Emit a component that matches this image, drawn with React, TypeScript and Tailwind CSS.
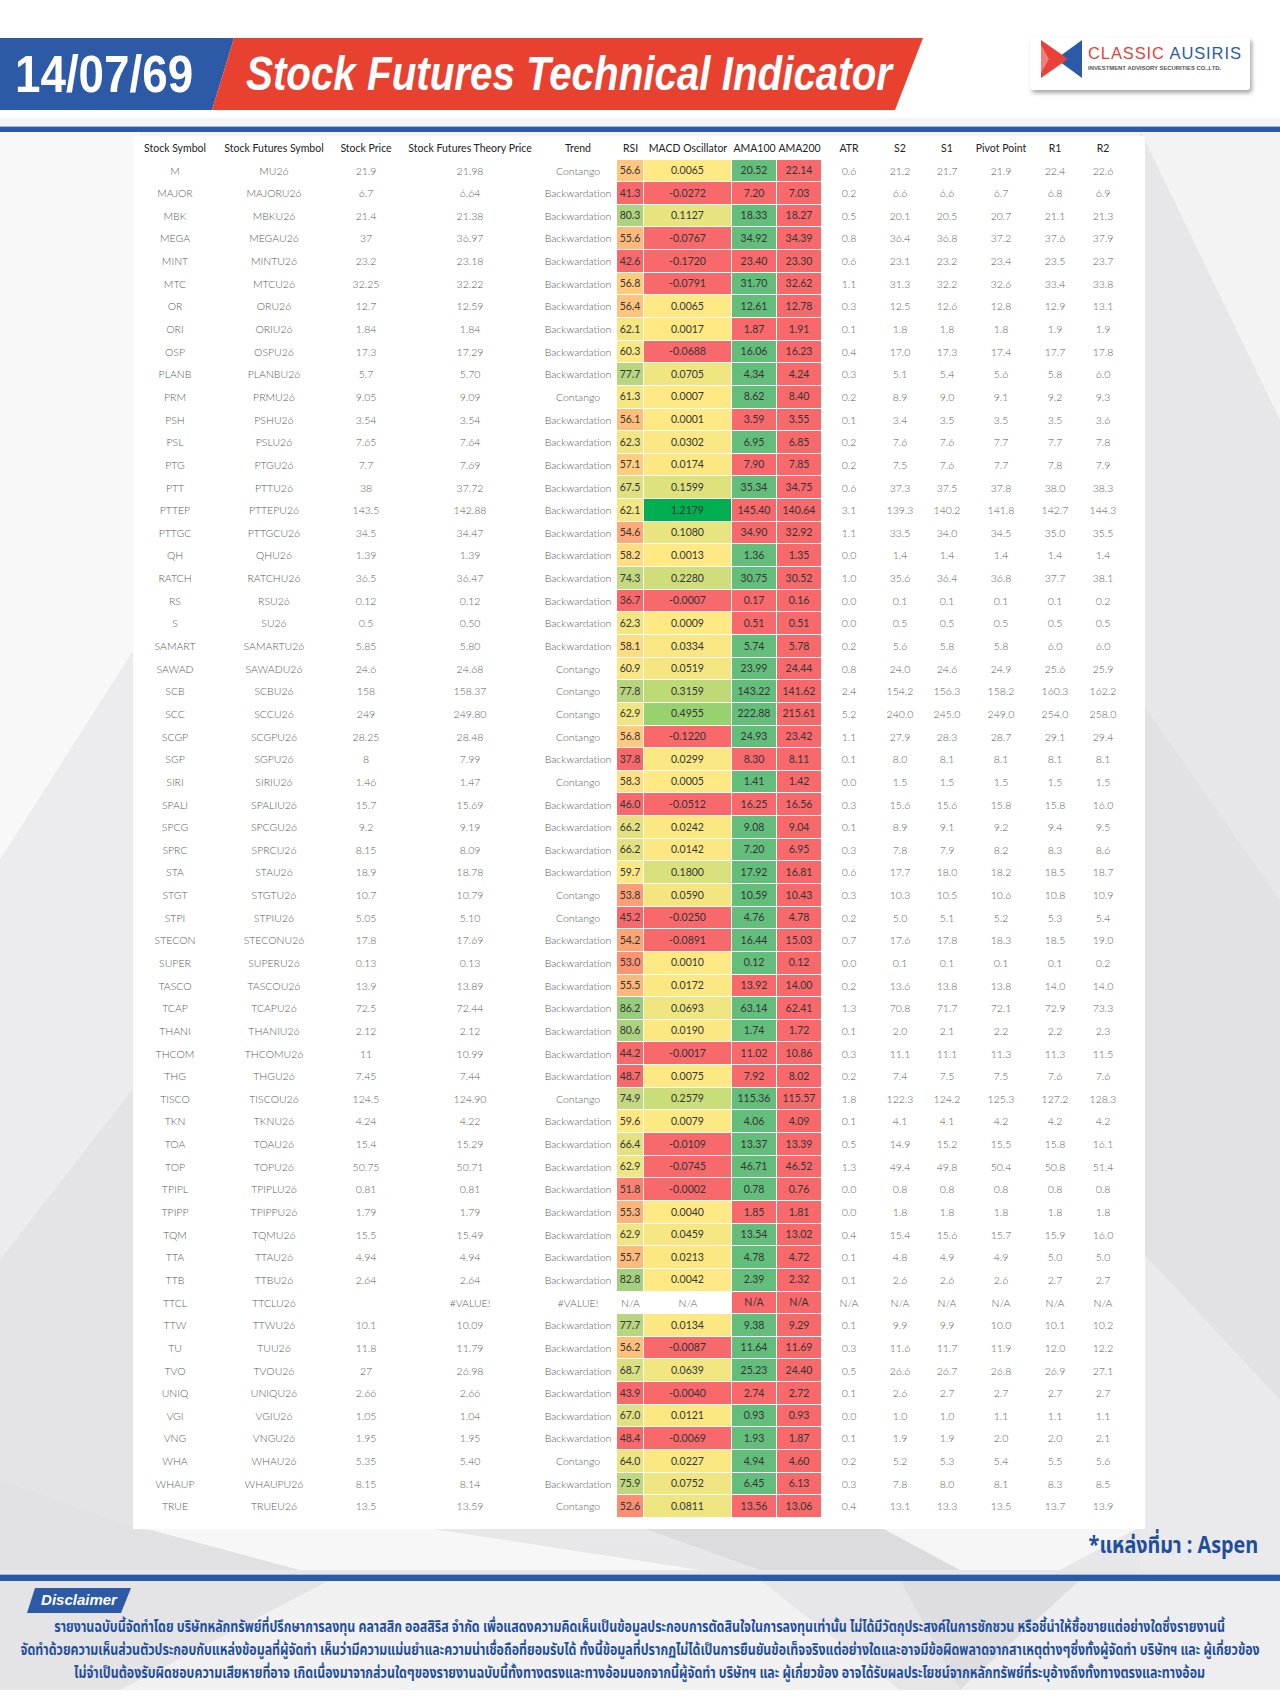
import React from "react";

type Row = string[];

const B = "Backwardation";
const C = "Contango";

const rows: Row[] = [
  ["M", "MU26", "21.9", "21.98", C, "56.6", "0.0065", "20.52", "22.14", "0.6", "21.2", "21.7", "21.9", "22.4", "22.6"],
  ["MAJOR", "MAJORU26", "6.7", "6.64", B, "41.3", "-0.0272", "7.20", "7.03", "0.2", "6.6", "6.6", "6.7", "6.8", "6.9"],
  ["MBK", "MBKU26", "21.4", "21.38", B, "80.3", "0.1127", "18.33", "18.27", "0.5", "20.1", "20.5", "20.7", "21.1", "21.3"],
  ["MEGA", "MEGAU26", "37", "36.97", B, "55.6", "-0.0767", "34.92", "34.39", "0.8", "36.4", "36.8", "37.2", "37.6", "37.9"],
  ["MINT", "MINTU26", "23.2", "23.18", B, "42.6", "-0.1720", "23.40", "23.30", "0.6", "23.1", "23.2", "23.4", "23.5", "23.7"],
  ["MTC", "MTCU26", "32.25", "32.22", B, "56.8", "-0.0791", "31.70", "32.62", "1.1", "31.3", "32.2", "32.6", "33.4", "33.8"],
  ["OR", "ORU26", "12.7", "12.59", B, "56.4", "0.0065", "12.61", "12.78", "0.3", "12.5", "12.6", "12.8", "12.9", "13.1"],
  ["ORI", "ORIU26", "1.84", "1.84", B, "62.1", "0.0017", "1.87", "1.91", "0.1", "1.8", "1.8", "1.8", "1.9", "1.9"],
  ["OSP", "OSPU26", "17.3", "17.29", B, "60.3", "-0.0688", "16.06", "16.23", "0.4", "17.0", "17.3", "17.4", "17.7", "17.8"],
  ["PLANB", "PLANBU26", "5.7", "5.70", B, "77.7", "0.0705", "4.34", "4.24", "0.3", "5.1", "5.4", "5.6", "5.8", "6.0"],
  ["PRM", "PRMU26", "9.05", "9.09", C, "61.3", "0.0007", "8.62", "8.40", "0.2", "8.9", "9.0", "9.1", "9.2", "9.3"],
  ["PSH", "PSHU26", "3.54", "3.54", B, "56.1", "0.0001", "3.59", "3.55", "0.1", "3.4", "3.5", "3.5", "3.5", "3.6"],
  ["PSL", "PSLU26", "7.65", "7.64", B, "62.3", "0.0302", "6.95", "6.85", "0.2", "7.6", "7.6", "7.7", "7.7", "7.8"],
  ["PTG", "PTGU26", "7.7", "7.69", B, "57.1", "0.0174", "7.90", "7.85", "0.2", "7.5", "7.6", "7.7", "7.8", "7.9"],
  ["PTT", "PTTU26", "38", "37.72", B, "67.5", "0.1599", "35.34", "34.75", "0.6", "37.3", "37.5", "37.8", "38.0", "38.3"],
  ["PTTEP", "PTTEPU26", "143.5", "142.88", B, "62.1", "1.2179", "145.40", "140.64", "3.1", "139.3", "140.2", "141.8", "142.7", "144.3"],
  ["PTTGC", "PTTGCU26", "34.5", "34.47", B, "54.6", "0.1080", "34.90", "32.92", "1.1", "33.5", "34.0", "34.5", "35.0", "35.5"],
  ["QH", "QHU26", "1.39", "1.39", B, "58.2", "0.0013", "1.36", "1.35", "0.0", "1.4", "1.4", "1.4", "1.4", "1.4"],
  ["RATCH", "RATCHU26", "36.5", "36.47", B, "74.3", "0.2280", "30.75", "30.52", "1.0", "35.6", "36.4", "36.8", "37.7", "38.1"],
  ["RS", "RSU26", "0.12", "0.12", B, "36.7", "-0.0007", "0.17", "0.16", "0.0", "0.1", "0.1", "0.1", "0.1", "0.2"],
  ["S", "SU26", "0.5", "0.50", B, "62.3", "0.0009", "0.51", "0.51", "0.0", "0.5", "0.5", "0.5", "0.5", "0.5"],
  ["SAMART", "SAMARTU26", "5.85", "5.80", B, "58.1", "0.0334", "5.74", "5.78", "0.2", "5.6", "5.8", "5.8", "6.0", "6.0"],
  ["SAWAD", "SAWADU26", "24.6", "24.68", C, "60.9", "0.0519", "23.99", "24.44", "0.8", "24.0", "24.6", "24.9", "25.6", "25.9"],
  ["SCB", "SCBU26", "158", "158.37", C, "77.8", "0.3159", "143.22", "141.62", "2.4", "154.2", "156.3", "158.2", "160.3", "162.2"],
  ["SCC", "SCCU26", "249", "249.80", C, "62.9", "0.4955", "222.88", "215.61", "5.2", "240.0", "245.0", "249.0", "254.0", "258.0"],
  ["SCGP", "SCGPU26", "28.25", "28.48", C, "56.8", "-0.1220", "24.93", "23.42", "1.1", "27.9", "28.3", "28.7", "29.1", "29.4"],
  ["SGP", "SGPU26", "8", "7.99", B, "37.8", "0.0299", "8.30", "8.11", "0.1", "8.0", "8.1", "8.1", "8.1", "8.1"],
  ["SIRI", "SIRIU26", "1.46", "1.47", C, "58.3", "0.0005", "1.41", "1.42", "0.0", "1.5", "1.5", "1.5", "1.5", "1.5"],
  ["SPALI", "SPALIU26", "15.7", "15.69", B, "46.0", "-0.0512", "16.25", "16.56", "0.3", "15.6", "15.6", "15.8", "15.8", "16.0"],
  ["SPCG", "SPCGU26", "9.2", "9.19", B, "66.2", "0.0242", "9.08", "9.04", "0.1", "8.9", "9.1", "9.2", "9.4", "9.5"],
  ["SPRC", "SPRCU26", "8.15", "8.09", B, "66.2", "0.0142", "7.20", "6.95", "0.3", "7.8", "7.9", "8.2", "8.3", "8.6"],
  ["STA", "STAU26", "18.9", "18.78", B, "59.7", "0.1800", "17.92", "16.81", "0.6", "17.7", "18.0", "18.2", "18.5", "18.7"],
  ["STGT", "STGTU26", "10.7", "10.79", C, "53.8", "0.0590", "10.59", "10.43", "0.3", "10.3", "10.5", "10.6", "10.8", "10.9"],
  ["STPI", "STPIU26", "5.05", "5.10", C, "45.2", "-0.0250", "4.76", "4.78", "0.2", "5.0", "5.1", "5.2", "5.3", "5.4"],
  ["STECON", "STECONU26", "17.8", "17.69", B, "54.2", "-0.0891", "16.44", "15.03", "0.7", "17.6", "17.8", "18.3", "18.5", "19.0"],
  ["SUPER", "SUPERU26", "0.13", "0.13", B, "53.0", "0.0010", "0.12", "0.12", "0.0", "0.1", "0.1", "0.1", "0.1", "0.2"],
  ["TASCO", "TASCOU26", "13.9", "13.89", B, "55.5", "0.0172", "13.92", "14.00", "0.2", "13.6", "13.8", "13.8", "14.0", "14.0"],
  ["TCAP", "TCAPU26", "72.5", "72.44", B, "86.2", "0.0693", "63.14", "62.41", "1.3", "70.8", "71.7", "72.1", "72.9", "73.3"],
  ["THANI", "THANIU26", "2.12", "2.12", B, "80.6", "0.0190", "1.74", "1.72", "0.1", "2.0", "2.1", "2.2", "2.2", "2.3"],
  ["THCOM", "THCOMU26", "11", "10.99", B, "44.2", "-0.0017", "11.02", "10.86", "0.3", "11.1", "11.1", "11.3", "11.3", "11.5"],
  ["THG", "THGU26", "7.45", "7.44", B, "48.7", "0.0075", "7.92", "8.02", "0.2", "7.4", "7.5", "7.5", "7.6", "7.6"],
  ["TISCO", "TISCOU26", "124.5", "124.90", C, "74.9", "0.2579", "115.36", "115.57", "1.8", "122.3", "124.2", "125.3", "127.2", "128.3"],
  ["TKN", "TKNU26", "4.24", "4.22", B, "59.6", "0.0079", "4.06", "4.09", "0.1", "4.1", "4.1", "4.2", "4.2", "4.2"],
  ["TOA", "TOAU26", "15.4", "15.29", B, "66.4", "-0.0109", "13.37", "13.39", "0.5", "14.9", "15.2", "15.5", "15.8", "16.1"],
  ["TOP", "TOPU26", "50.75", "50.71", B, "62.9", "-0.0745", "46.71", "46.52", "1.3", "49.4", "49.8", "50.4", "50.8", "51.4"],
  ["TPIPL", "TPIPLU26", "0.81", "0.81", B, "51.8", "-0.0002", "0.78", "0.76", "0.0", "0.8", "0.8", "0.8", "0.8", "0.8"],
  ["TPIPP", "TPIPPU26", "1.79", "1.79", B, "55.3", "0.0040", "1.85", "1.81", "0.0", "1.8", "1.8", "1.8", "1.8", "1.8"],
  ["TQM", "TQMU26", "15.5", "15.49", B, "62.9", "0.0459", "13.54", "13.02", "0.4", "15.4", "15.6", "15.7", "15.9", "16.0"],
  ["TTA", "TTAU26", "4.94", "4.94", B, "55.7", "0.0213", "4.78", "4.72", "0.1", "4.8", "4.9", "4.9", "5.0", "5.0"],
  ["TTB", "TTBU26", "2.64", "2.64", B, "82.8", "0.0042", "2.39", "2.32", "0.1", "2.6", "2.6", "2.6", "2.7", "2.7"],
  ["TTCL", "TTCLU26", "", "#VALUE!", "#VALUE!", "N/A", "N/A", "N/A", "N/A", "N/A", "N/A", "N/A", "N/A", "N/A", "N/A"],
  ["TTW", "TTWU26", "10.1", "10.09", B, "77.7", "0.0134", "9.38", "9.29", "0.1", "9.9", "9.9", "10.0", "10.1", "10.2"],
  ["TU", "TUU26", "11.8", "11.79", B, "56.2", "-0.0087", "11.64", "11.69", "0.3", "11.6", "11.7", "11.9", "12.0", "12.2"],
  ["TVO", "TVOU26", "27", "26.98", B, "68.7", "0.0639", "25.23", "24.40", "0.5", "26.6", "26.7", "26.8", "26.9", "27.1"],
  ["UNIQ", "UNIQU26", "2.66", "2.66", B, "43.9", "-0.0040", "2.74", "2.72", "0.1", "2.6", "2.7", "2.7", "2.7", "2.7"],
  ["VGI", "VGIU26", "1.05", "1.04", B, "67.0", "0.0121", "0.93", "0.93", "0.0", "1.0", "1.0", "1.1", "1.1", "1.1"],
  ["VNG", "VNGU26", "1.95", "1.95", B, "48.4", "-0.0069", "1.93", "1.87", "0.1", "1.9", "1.9", "2.0", "2.0", "2.1"],
  ["WHA", "WHAU26", "5.35", "5.40", C, "64.0", "0.0227", "4.94", "4.60", "0.2", "5.2", "5.3", "5.4", "5.5", "5.6"],
  ["WHAUP", "WHAUPU26", "8.15", "8.14", B, "75.9", "0.0752", "6.45", "6.13", "0.3", "7.8", "8.0", "8.1", "8.3", "8.5"],
  ["TRUE", "TRUEU26", "13.5", "13.59", C, "52.6", "0.0811", "13.56", "13.06", "0.4", "13.1", "13.3", "13.5", "13.7", "13.9"],
];

const headers = [
  "Stock Symbol",
  "Stock Futures Symbol",
  "Stock Price",
  "Stock Futures Theory Price",
  "Trend",
  "RSI",
  "MACD Oscillator",
  "AMA100",
  "AMA200",
  "ATR",
  "S2",
  "S1",
  "Pivot Point",
  "R1",
  "R2",
];

const RED = [248, 105, 107];
const YELLOW = [255, 233, 132];
const GREEN = [99, 190, 123];
const DEEP_GREEN = [0, 176, 80];

function mix(a: number[], b: number[], t: number) {
  const k = Math.min(1, Math.max(0, t));
  const c = a.map((v, i) => Math.round(v + (b[i] - v) * k));
  return `rgb(${c[0]}, ${c[1]}, ${c[2]})`;
}

const macdMax = Math.max(...rows.map((r) => parseFloat(r[6])).filter((v) => !isNaN(v)));

// RSI: red below 50, yellow around 59, green towards 100
function rsiColor(s: string) {
  const v = parseFloat(s);
  if (isNaN(v)) return undefined;
  if (v <= 59) return mix(RED, YELLOW, (v - 50) / 9);
  return mix(YELLOW, GREEN, (v - 59) / 41);
}

// MACD: negative is flat red, positive runs yellow -> green
function macdColor(s: string) {
  const v = parseFloat(s);
  if (isNaN(v)) return undefined;
  if (v < 0) return mix(RED, RED, 0);
  return mix(YELLOW, DEEP_GREEN, v / macdMax);
}

function amaColor(price: string, ama: string) {
  const p = parseFloat(price);
  const a = parseFloat(ama);
  if (!isNaN(p) && !isNaN(a) && p > a) return mix(GREEN, GREEN, 0);
  return mix(RED, RED, 0);
}

const cols =
  "grid grid-cols-[84px_114px_70px_138px_78px_27px_88px_45px_45px_54px_48px_46px_62px_46px_50px]";

function Cell({ children, bg }: { children: React.ReactNode; bg?: string }) {
  if (bg) {
    return (
      <div
        className="flex items-center justify-center border-b border-r border-white font-normal text-[#353535]"
        style={{ backgroundColor: bg }}
      >
        {children}
      </div>
    );
  }
  return <div className="flex items-center justify-center whitespace-nowrap">{children}</div>;
}

function DataRow({ r }: { r: Row }) {
  return (
    <div className={`${cols} h-[22.65px] text-[10.5px] leading-none font-light text-[#5a5a5a]`}>
      {r.map((v, i) => {
        let bg: string | undefined;
        if (i === 5) bg = rsiColor(v);
        if (i === 6) bg = macdColor(v);
        if (i === 7) bg = amaColor(r[2], v);
        if (i === 8) bg = mix(RED, RED, 0);
        return (
          <Cell key={i} bg={bg}>
            {v}
          </Cell>
        );
      })}
    </div>
  );
}

function Logo() {
  return (
    <div className="-mt-px mr-[30px] flex h-[53px] w-[220px] items-start rounded-[3px] bg-white shadow-[2px_3px_4px_rgba(0,0,0,0.35)]">
      <svg className="ml-[11px] mt-[3px]" width="41" height="38" viewBox="0 0 41 38">
        <polygon points="41,0 41,38 15,19" fill="#2b5aa8" />
        <polygon points="0,0 27,19 0,38" fill="#e8413a" />
        <polygon points="0,5 8,19 0,33" fill="#f07f78" />
      </svg>
      <div className="ml-[6px] mt-[8px] flex flex-col font-['Liberation_Sans',sans-serif]">
        <div className="whitespace-nowrap text-[16.5px] leading-[17px] tracking-[0.9px]">
          <span className="text-[#e8413a]">CLASSIC </span>
          <span className="text-[#2b5aa8]">AUSIRIS</span>
        </div>
        <div className="mt-[3px] whitespace-nowrap text-[5.9px] font-bold leading-[7px] text-[#555]">
          INVESTMENT ADVISORY SECURITIES CO.,LTD.
        </div>
      </div>
    </div>
  );
}

function Background() {
  return (
    <svg className="absolute inset-0" width="1280" height="1707" viewBox="0 0 1280 1707">
      <defs>
        <linearGradient id="bg" x1="0" y1="0" x2="0" y2="1">
          <stop offset="0" stopColor="#ffffff" />
          <stop offset="0.08" stopColor="#f4f4f5" />
          <stop offset="1" stopColor="#e6e6e8" />
        </linearGradient>
      </defs>
      <rect width="1280" height="1707" fill="url(#bg)" />
      <rect width="1280" height="118" fill="#ffffff" />
      <polygon points="0,130 140,130 140,640 0,860" fill="#f8f8f9" />
      <polygon points="0,860 140,640 140,1080 0,1260" fill="#ececee" />
      <polygon points="0,1260 140,1080 140,1530 0,1480" fill="#e4e4e6" />
      <polygon points="1140,130 1280,130 1280,420" fill="#f3f3f4" />
      <polygon points="1140,130 1280,420 1280,900 1140,700" fill="#e7e7e9" />
      <polygon points="1140,700 1280,900 1280,1400 1140,1250" fill="#e2e2e4" />
      <polygon points="1140,1250 1280,1400 1280,1570 1140,1570" fill="#eaeaec" />
      <polygon points="0,1480 140,1530 460,1570 0,1570" fill="#e1e1e3" />
      <polygon points="140,1527 420,1527 700,1570 300,1570" fill="#f7f7f8" />
      <polygon points="640,1527 880,1527 960,1570 760,1570" fill="#dcdcdf" />
      <polygon points="880,1527 1140,1527 1060,1570 960,1570" fill="#f5f5f6" />
      <polygon points="0,1580 330,1580 120,1690 0,1690" fill="#e4e4e6" />
      <polygon points="330,1580 760,1580 900,1690 120,1690" fill="#f1f1f2" />
      <polygon points="900,1580 1080,1580 960,1690" fill="#dedee1" />
      <polygon points="1080,1580 1280,1580 1280,1690 960,1690" fill="#eeeef0" />
      <rect y="1690" width="1280" height="17" fill="#ffffff" />
    </svg>
  );
}

const thai = "font-['Noto_Sans_Thai','Noto_Sans','DejaVu_Sans',sans-serif]";

export default function App() {
  return (
    <div className="relative h-[1707px] w-[1280px] overflow-hidden">
      <Background />
      <div className="relative flex flex-col pt-[38px]">
        <header className="flex h-[72px] items-start">
          <div className="flex h-[72px] w-[234px] items-center bg-[#2c5aa6] [clip-path:polygon(0_0,100%_0,calc(100%_-_22px)_100%,0_100%)]">
            <span className="ml-[15px] origin-left scale-x-[0.88] whitespace-nowrap font-['Liberation_Sans',sans-serif] text-[52px] font-bold leading-none text-white">
              14/07/69
            </span>
          </div>
          <div className="-ml-[22px] flex h-[72px] w-[711px] items-center bg-[#e9412f] [clip-path:polygon(22px_0,100%_0,calc(100%_-_28px)_100%,0_100%)]">
            <span className="ml-[34px] origin-left scale-x-[0.84] whitespace-nowrap font-['Liberation_Sans',sans-serif] text-[48px] font-bold italic leading-none text-white">
              Stock Futures Technical Indicator
            </span>
          </div>
          <div className="flex-1" />
          <Logo />
        </header>

        <div className="mt-[16px] h-[6px] border-t border-[#9db7e0] bg-[#2c5aa6]" />

        <div className="ml-[133px] mt-[4px] w-[1012px] bg-white pb-[11px] font-['Lato',sans-serif]">
          <div className={`${cols} h-[23.5px] text-[10.5px] leading-none text-[#222]`}>
            {headers.map((h) => (
              <div key={h} className="flex items-center justify-center whitespace-nowrap">
                {h}
              </div>
            ))}
          </div>
          {rows.map((r) => (
            <DataRow key={r[0]} r={r} />
          ))}
        </div>

        <div className={`mt-[5px] flex justify-end pr-[22px] ${thai}`}>
          <span className="origin-right scale-x-[0.86] text-[23px] font-bold leading-[25px] text-[#1f4e9d]">
            *แหล่งที่มา : Aspen
          </span>
        </div>

        <div className="mt-[15px] h-[7px] border-t border-[#9db7e0] bg-[#2c5aa6]" />

        <div className="ml-[27px] mt-[7px] flex h-[25px] w-[104px] items-center justify-center bg-[#2c5aa6] [clip-path:polygon(8px_0,100%_0,calc(100%_-_10px)_100%,0_100%)]">
          <span className="font-['Liberation_Sans',sans-serif] text-[15px] font-bold italic text-white">
            Disclaimer
          </span>
        </div>

        <div className={`mt-[3px] flex flex-col items-center text-[15px] font-bold leading-[23px] text-[#1f4e9d] ${thai}`}>
          <p className="scale-x-[0.826] whitespace-nowrap">
            รายงานฉบับนี้จัดทำโดย บริษัทหลักทรัพย์ที่ปรึกษาการลงทุน คลาสสิก ออสสิริส จำกัด  เพื่อแสดงความคิดเห็นเป็นข้อมูลประกอบการตัดสินใจในการลงทุนเท่านั้น ไม่ได้มีวัตถุประสงค์ในการชักชวน หรือชี้นำให้ซื้อขายแต่อย่างใดซึ่งรายงานนี้
          </p>
          <p className="scale-x-[0.826] whitespace-nowrap">
            จัดทำด้วยความเห็นส่วนตัวประกอบกับแหล่งข้อมูลที่ผู้จัดทำ เห็นว่ามีความแม่นยำและความน่าเชื่อถือที่ยอมรับได้ ทั้งนี้ข้อมูลที่ปรากฏไม่ได้เป็นการยืนยันข้อเท็จจริงแต่อย่างใดและอาจมีข้อผิดพลาดจากสาเหตุต่างๆซึ่งทั้งผู้จัดทำ  บริษัทฯ  และ  ผู้เกี่ยวข้อง
          </p>
          <p className="scale-x-[0.826] whitespace-nowrap">
            ไม่จำเป็นต้องรับผิดชอบความเสียหายที่อาจ เกิดเนื่องมาจากส่วนใดๆของรายงานฉบับนี้ทั้งทางตรงและทางอ้อมนอกจากนี้ผู้จัดทำ บริษัทฯ และ ผู้เกี่ยวข้อง  อาจได้รับผลประโยชน์จากหลักทรัพย์ที่ระบุอ้างถึงทั้งทางตรงและทางอ้อม
          </p>
        </div>
      </div>
    </div>
  );
}
